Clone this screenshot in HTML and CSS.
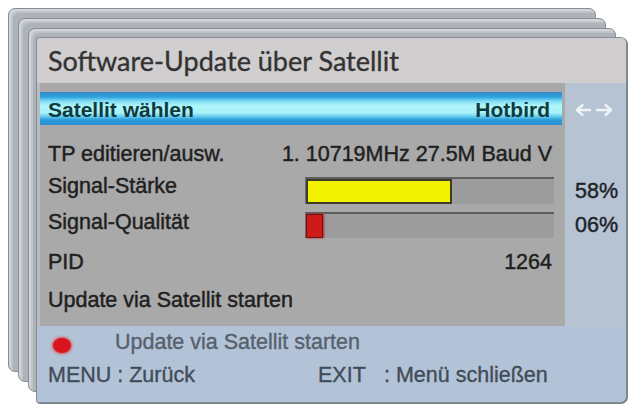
FILE: index.html
```html
<!DOCTYPE html>
<html lang="de">
<head>
<meta charset="utf-8">
<title>Software-Update über Satellit</title>
<link rel="stylesheet" href="styles.css">
</head>
<body>
<div class="stage">
  <div class="win back b1"></div>
  <div class="win back b2"></div>
  <div class="win back b3"></div>
  <div class="win front">
    <div class="title">Software-Update über Satellit</div>
    <div class="mid">
      <div class="panel-bg"></div>
      <div class="hl"><span>Satellit wählen</span><span>Hotbird</span></div>
      <div class="side arrow-cell">
        <svg class="arrows" width="38" height="14" viewBox="0 0 38 14">
          <path d="M2 7 H15 M7.5 2 L2 7 L7.5 12" fill="none" stroke="#eef3f8" stroke-width="2.4" stroke-linecap="round" stroke-linejoin="round"/>
          <path d="M22 7 H36 M30.5 2 L36 7 L30.5 12" fill="none" stroke="#eef3f8" stroke-width="2.4" stroke-linecap="round" stroke-linejoin="round"/>
        </svg>
      </div>
      <div class="row r-tp"><span>TP editieren/ausw.</span><span>1. 10719MHz 27.5M Baud V</span></div>
      <div class="row bar-row r-st">
        <span class="lbl">Signal-Stärke</span>
        <div class="track t1"><div class="fill yellow" style="width:59%"></div></div>
      </div>
      <div class="side pct p-st">58%</div>
      <div class="row bar-row r-q">
        <span class="lbl">Signal-Qualität</span>
        <div class="track t2"><div class="fill red" style="width:7%"></div></div>
      </div>
      <div class="side pct p-q">06%</div>
      <div class="row r-pid"><span>PID</span><span>1264</span></div>
      <div class="row r-up"><span>Update via Satellit starten</span></div>
    </div>
    <div class="footer">
      <div class="f-line f1"><span class="dot"></span><span class="f-text">Update via Satellit starten</span></div>
      <div class="f-line f2"><span class="k1">MENU : Zurück</span><span class="k2">EXIT</span><span class="k3">: Menü schließen</span></div>
    </div>
  </div>
</div>
</body>
</html>
```
FILE: styles.css
```css
* { box-sizing: border-box; }
html, body { margin: 0; padding: 0; background: #ffffff; }
body { font-family: "Liberation Sans", Arial, sans-serif; }

.stage {
  position: relative;
  width: 632px;
  height: 404px;
  padding: 38px 6px 2px 37px;
  overflow: hidden;
}

.win.back {
  position: absolute;
  width: 588px;
  height: 364px;
  border-radius: 7px;
  background: #adb3b9;
  border: 1px solid #878d94;
  box-shadow: inset 2px 2px 0 #d3d7db, inset 4px 4px 0 #bfc4c9;
}
.b1 { left: 8px; top: 8px; }
.b2 { left: 18px; top: 18px; }
.b3 { left: 28px; top: 28px; }

.win.front {
  position: relative;
  width: 589px;
  height: 364px;
  border-radius: 3px 5px 6px 2px;
  overflow: hidden;
  box-shadow: 0 0 0 1px #868c93, 1px 1px 0 1px #7b828a;
  display: flex;
  flex-direction: column;
}

.title {
  height: 45px;
  background: #d0cecf;
  color: #333333;
  font-family: "Lato", "Liberation Sans", sans-serif;
  font-size: 27px;
  line-height: 46px;
  padding-left: 11px;
  -webkit-text-stroke: 0.35px #333333;
}

.mid {
  height: 243px;
  background: #b6c3d2;
  display: grid;
  grid-template-columns: 528px 61px;
  grid-template-rows: 9px 33px 14px 30px 3px 36px 36px 3px 30px 8px 30px 11px;
  color: #1f1f1f;
  font-size: 21.5px;
}
.panel-bg {
  grid-column: 1;
  grid-row: 1 / -1;
  background: #a9a9a9;
  box-shadow: inset 3px 0 0 #bbbec1;
}

.row, .pct { -webkit-text-stroke: 0.45px #1f1f1f; }

.hl {
  grid-column: 1;
  grid-row: 2;
  margin: 0 3px;
  padding: 3px 12px 0 8px;
  line-height: 30px;
  display: flex;
  justify-content: space-between;
  font-weight: bold;
  font-size: 21px;
  color: #0f3a3e;
  background: linear-gradient(to bottom, #3489c4 0px, #2ea3df 5px, #7fdcf2 9px, #b2f6fb 14px, #a6f1f8 21px, #5cc6ec 25px, #2a9ad8 28px, #2a8fcf 33px);
}

.side { grid-column: 2; padding-left: 10px; }
.arrow-cell {
  grid-row: 2;
  display: flex;
  align-items: center;
  padding-top: 2px;
}
.arrows { display: block; }

.row {
  grid-column: 1;
  display: flex;
  justify-content: space-between;
  padding: 0 13px 0 11px;
  line-height: 30px;
  white-space: nowrap;
}
.r-tp { grid-row: 4; }
.r-pid { grid-row: 9; }
.r-up { grid-row: 11; }

.bar-row {
  justify-content: flex-start;
  align-items: flex-start;
  padding-right: 11px;
}
.r-st { grid-row: 6; }
.r-q { grid-row: 7; }
.lbl { width: 257px; line-height: 28px; }

.track {
  width: 249px;
  background: #9c9c9c;
  border-top: 2px solid #5e5e5e;
  border-left: 1px solid #6e6e6e;
  display: flex;
}
.t1 { height: 27px; margin-top: 5px; }
.t2 { height: 26px; margin-top: 4px; }
.fill { height: 100%; }
.yellow {
  background: #f2f200;
  border: 2px solid #3c3c28;
}
.red {
  background: #cf1a1a;
  border: 1px solid #6a1414;
  box-shadow: 1px 0 2px #c02020;
}

.pct {
  display: flex;
  align-items: center;
  color: #20232a;
  font-size: 21.5px;
  -webkit-text-stroke-color: #20232a;
}
.p-st { grid-row: 6; padding-top: 2px; }
.p-q { grid-row: 7; padding-bottom: 1px; }

.footer {
  height: 76px;
  background: #b3c3d7;
  padding: 4px 0 0 11px;
  display: flex;
  flex-direction: column;
  gap: 9px;
  font-size: 21.5px;
  line-height: 24px;
  white-space: nowrap;
}
.f-line { display: flex; align-items: center; }
.dot {
  width: 18px;
  height: 15px;
  margin: 6px 0 0 5px;
  border-radius: 50%;
  background: #d8141c;
  box-shadow: 0 0 3px 1px #e24a55;
}
.f-text { margin-left: 44px; color: #56616c; -webkit-text-stroke: 0.35px #56616c; }
.f2 { color: #414c57; -webkit-text-stroke: 0.35px #414c57; }
.k1 { width: 270px; }
.k2 { width: 66px; }
```
